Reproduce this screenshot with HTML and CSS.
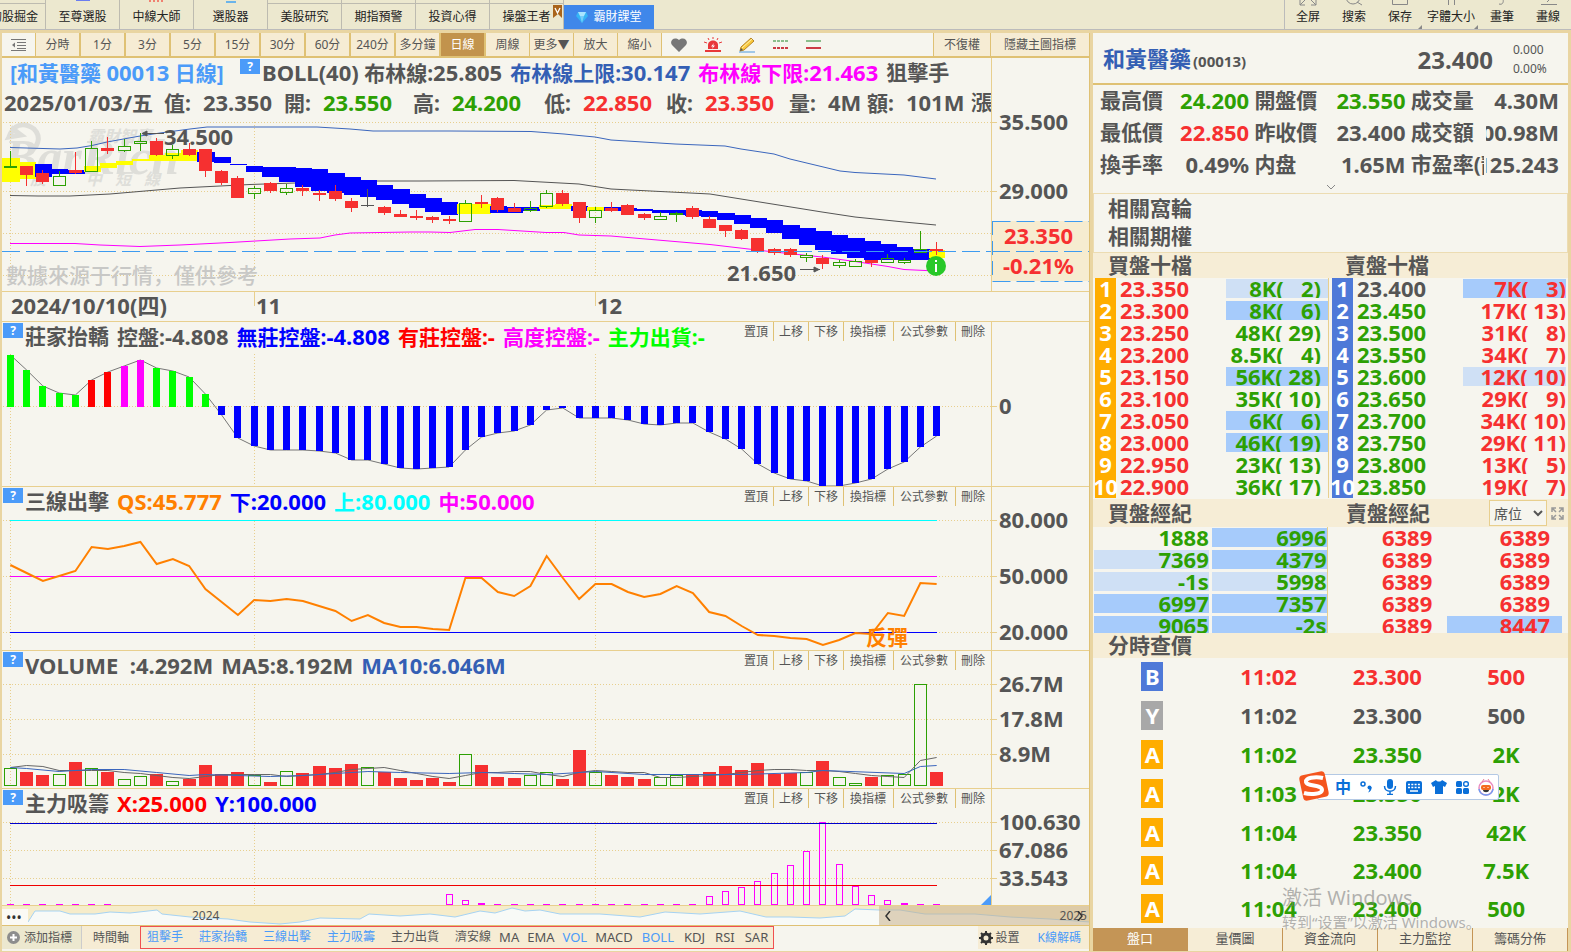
FILE: index.html
```html
<!DOCTYPE html>
<html lang="zh-CN">
<head>
<meta charset="utf-8">
<title>和黃醫藥 00013 日線</title>
<link rel="stylesheet" href="styles.css">
</head>
<body>
<div class="app">
  <header class="topbar">
    <nav class="tabs">
      <button class="tab tab-first capped">的股掘金</button>
      <button class="tab"><svg class="frag" width="16" height="2"><rect x="1" width="14" height="1" fill="#6b7df0"/></svg>至尊選股</button>
      <button class="tab"><svg class="frag" width="16" height="2"><path d="M1 0v2M5 0v2M9 0v2M13 0v2" stroke="#f08070" stroke-width="2"/></svg>中線大師</button>
      <button class="tab"><svg class="frag" width="16" height="3"><rect x="3" y="1" width="10" height="2" fill="#6bb4ea"/></svg>選股器</button>
      <button class="tab capped">美股研究</button>
      <button class="tab capped">期指預警</button>
      <button class="tab capped">投資心得</button>
      <button class="tab capped">操盤王者<svg class="vip" width="9" height="13"><path d="M0 0h9v13l-4-4-5 4z" fill="#a9641b"/><path d="M2 3l2.500 5L7 3" stroke="#fff" fill="none" stroke-width="1.300"/></svg></button>
      <button class="tab tab-course"><svg width="12" height="11" viewBox="0 0 12 11"><path d="M2 0h8l2 4-6 7-6-7z" fill="#35b4f5"/><path d="M2 0h8L8 4H4z" fill="#a8e4ff"/><path d="M4 4h4l-2 7z" fill="#74cdfb"/></svg>霸財課堂</button>
    </nav>
    <div class="tools">
      <button class="tool"><svg width="18" height="16"><path d="M1 10v5h5M1 15l6-6M17 10v5h-5M17 15l-6-6" fill="none" stroke="#888"/></svg>全屏</button>
      <button class="tool"><svg width="20" height="16"><circle cx="9" cy="7" r="7" fill="none" stroke="#888"/><path d="M13 12l5 3" stroke="#888"/></svg>搜索</button>
      <button class="tool more"><svg width="18" height="16"><path d="M1.500 1h15v13.500h-15z" fill="none" stroke="#888"/></svg>保存</button>
      <button class="tool more"><svg width="18" height="16"><path d="M6.500 0v15M12.500 0v15" stroke="#888"/></svg>字體大小</button>
      <button class="tool"><svg width="18" height="16"><path d="M6 14c3 1 5-1 4-5" fill="none" stroke="#888"/></svg>畫筆</button>
      <button class="tool"><svg width="18" height="16"><path d="M2 14.500h16M8 12l8-8" stroke="#888"/></svg>畫線</button>
    </div>
  </header>

  <main class="main">
    <section class="left">
      <div class="toolbar">
        <button class="tb-menu" aria-label="選單"><svg width="15" height="12"><path d="M0 .5h15M6 3.500h9M6 6.500h9M6 9.500h9M0 11.500h15" stroke="#777"/><path d="M4 3.500v5L1 6z" fill="#777"/></svg></button>
        <div class="periods">
          <button>分時</button><button>1分</button><button>3分</button><button>5分</button><button>15分</button><button>30分</button><button>60分</button><button>240分</button><button>多分鐘</button><button class="on">日線</button><button>周線</button><button>更多▼</button><button>放大</button><button>縮小</button>
        </div>
        <div class="marks">
          <svg width="16" height="14" viewBox="0 0 16 14"><path d="M8 14L1 7C-2 3 3-2 8 2c5-4 10 1 7 5z" fill="#777"/></svg>
          <svg width="18" height="16" viewBox="0 0 18 16"><path d="M4 12V8c0-6 10-6 10 0v4z" fill="#e8383a"/><path d="M1 13h16v2H1z" fill="#e8383a"/><path d="M9 0v2M4 1l1 2M14 1l-1 2M0 5l3 1M18 5l-3 1" stroke="#e8383a"/><path d="M10 6L7 9.500h2L8 12l3-3.500H9z" fill="#fff"/></svg>
          <svg width="17" height="16" viewBox="0 0 17 16"><path d="M0 15h16" stroke="#4c9ae0"/><path d="M1 14l1-4L12 1l3 3-10 9z" fill="#f9c93c" stroke="#b98524"/><path d="M3 11L13 2" stroke="#fff0b0"/><path d="M1 14l1-3 2 2z" fill="#555"/></svg>
          <svg width="16" height="12"><path d="M0 2h16" stroke="#8bbd8b" stroke-width="2" stroke-dasharray="3 1"/><path d="M0 9h16" stroke="#cc3b46" stroke-width="2" stroke-dasharray="3 1"/></svg>
          <svg width="15" height="12"><path d="M0 2h15" stroke="#8bbd8b" stroke-width="2"/><path d="M0 9h15" stroke="#cc3b46" stroke-width="2"/></svg>
        </div>
        <button class="tb-right">不復權</button>
        <button class="tb-axis">隱藏主圖指標</button>
      </div>

      <section class="panel">
        <div class="plot">
          <div class="boll">
            <span class="sky name">[和黃醫藥 <b>00013</b> 日線]</span>
            <button class="help">?</button>
            <span><b>BOLL(40)</b> 布林線:<b>25.805</b></span>
            <span class="navy">布林線上限:<b>30.147</b></span>
            <span class="mag">布林線下限:<b>21.463</b></span>
            <span>狙擊手</span>
          </div>
          <div class="ohlc">
            <span><b>2025/01/03/</b>五</span>
            <span>值:<b>23.350</b></span>
            <span>開:<b class="green">23.550</b></span>
            <span>高:<b class="green">24.200</b></span>
            <span>低:<b class="red">22.850</b></span>
            <span>收:<b class="red">23.350</b></span>
            <span>量:<b>4M</b></span>
            <span>額:<b>101M</b></span>
            <span>漲</span>
          </div>
          <svg id="kline" class="chart" height="173"></svg>
        </div>
        <svg id="kline-axis" class="axis"></svg>
      </section>
      <svg id="dates" class="dates" height="29"></svg>

      <section class="panel">
        <div class="plot">
          <div class="title">
            <button class="help">?</button>
            <span>莊家抬轎</span><span>控盤:<b>-4.808</b></span><span class="blue">無莊控盤:<b>-4.808</b></span><span class="pure">有莊控盤:<b>-</b></span><span class="mag">高度控盤:<b>-</b></span><span class="lime">主力出貨:<b>-</b></span>
            <span class="acts"><button>置頂</button><button>上移</button><button>下移</button><button>換指標</button><button>公式參數</button><button>刪除</button></span>
          </div>
          <svg id="control" class="chart" height="132"></svg>
        </div>
        <svg id="control-axis" class="axis"></svg>
      </section>

      <section class="panel">
        <div class="plot">
          <div class="title">
            <button class="help">?</button>
            <span>三線出擊</span><span class="orange"><b>QS:45.777</b></span><span class="blue">下<b>:20.000</b></span><span class="cyan">上<b>:80.000</b></span><span class="mag">中<b>:50.000</b></span>
            <span class="acts"><button>置頂</button><button>上移</button><button>下移</button><button>換指標</button><button>公式參數</button><button>刪除</button></span>
          </div>
          <svg id="three" class="chart" height="131"></svg>
        </div>
        <svg id="three-axis" class="axis"></svg>
      </section>

      <section class="panel">
        <div class="plot">
          <div class="title">
            <button class="help">?</button>
            <span><b>VOLUME &nbsp;:4.292M</b></span><span><b>MA5:8.192M</b></span><span class="navy"><b>MA10:6.046M</b></span>
            <span class="acts"><button>置頂</button><button>上移</button><button>下移</button><button>換指標</button><button>公式參數</button><button>刪除</button></span>
          </div>
          <svg id="volume" class="chart" height="105"></svg>
        </div>
        <svg id="volume-axis" class="axis"></svg>
      </section>

      <section class="panel">
        <div class="plot">
          <div class="title">
            <button class="help">?</button>
            <span>主力吸籌</span><span class="pure"><b>X:25.000</b></span><span class="blue"><b>Y:100.000</b></span>
            <span class="acts"><button>置頂</button><button>上移</button><button>下移</button><button>換指標</button><button>公式參數</button><button>刪除</button></span>
          </div>
          <svg id="absorb" class="chart" height="84"></svg>
          <i class="corner"></i>
        </div>
        <svg id="absorb-axis" class="axis"></svg>
      </section>

      <div class="strip">
        <svg id="history" width="100%" height="19"></svg>
        <span class="dots">•••</span>
        <span class="year">2024</span>
        <div class="thumb"><svg width="6" height="10"><path d="M5 0L1 5l4 5" fill="none" stroke="#333" stroke-width="1.500"/></svg><span>2025</span><svg width="6" height="10"><path d="M1 0l4 5-4 5" fill="none" stroke="#333" stroke-width="1.500"/></svg></div>
      </div>

      <footer class="bottombar">
        <button class="add"><svg width="13" height="13"><circle cx="6.500" cy="6.500" r="6.500" fill="#8d8d8d"/><path d="M6.500 3v7M3 6.500h7" stroke="#fff" stroke-width="2"/></svg>添加指標</button>
        <button class="timeaxis">時間軸</button>
        <div class="indicators">
          <button class="sky">狙擊手</button><button class="sky">莊家抬轎</button><button class="sky">三線出擊</button><button class="sky">主力吸籌</button><button>主力出貨</button><button class="last">濟安線</button><button class="lat">MA</button><button class="lat">EMA</button><button class="lat sky">VOL</button><button class="lat">MACD</button><button class="lat sky wide">BOLL</button><button class="lat wide">KDJ</button><button class="lat wide">RSI</button><button class="lat wide">SAR</button>
        </div>
        <div class="settings">
          <button><svg width="14" height="14" viewBox="-7 -7 14 14"><circle r="4" fill="none" stroke="#333" stroke-width="3"/><path d="M0-7V-4M0 7V4M-7 0h3M7 0H4M-5-5l2 2M5 5L3 3M-5 5l2-2M5-5L3-3" stroke="#333" stroke-width="2"/></svg>設置</button>
          <button class="sky">K線解碼</button>
        </div>
      </footer>
    </section>

    <aside class="right">
      <div class="quote">
        <h1>和黃醫藥<small>(00013)</small></h1>
        <strong>23.400</strong>
        <div class="chg"><span>0.000</span><span>0.00%</span></div>
      </div>
      <dl class="stats">
        <dt>最高價</dt><dd class="green">24.200</dd><dt>開盤價</dt><dd class="green">23.550</dd><dt>成交量</dt><dd>4.30M</dd>
        <dt>最低價</dt><dd class="red">22.850</dd><dt>昨收價</dt><dd>23.400</dd><dt>成交額</dt><dd>100.98M</dd>
        <dt>換手率</dt><dd>0.49%</dd><dt>内盘</dt><dd>1.65M</dd><dt>市盈率(静)</dt><dd>125.243</dd>
      </dl>
      <button class="expand" aria-label="展開"><svg width="10" height="6"><path d="M1 1l4 4 4-4" fill="none" stroke="#888"/></svg></button>
      <div class="related"><a href="#">相關窩輪</a><a href="#">相關期權</a></div>

      <div class="band"><h2>買盤十檔</h2><h2>賣盤十檔</h2></div>
      <div class="books">
        <table class="book buy"><tbody id="buy"></tbody></table>
        <table class="book sell"><tbody id="sell"></tbody></table>
      </div>

      <div class="band band-brokers"><h2>買盤經紀</h2><h2>賣盤經紀</h2>
        <select aria-label="經紀顯示"><option>席位</option></select>
        <button class="full" aria-label="放大"><svg width="13" height="13"><path d="M1 5V1h4M8 1h4v4M12 8v4H8M5 12H1V8M1 1l4 4M12 1L8 5M12 12L8 8M1 12l4-4" fill="none" stroke="#999" stroke-width="1.500"/></svg></button>
      </div>
      <div class="brokers">
        <table><tbody id="brokers"></tbody></table>
      </div>

      <div class="band"><h2>分時查價</h2></div>
      <table class="ticks"><tbody id="ticks"></tbody></table>

      <nav class="rtabs"><button class="on">盤口</button><button>量價圖</button><button>資金流向</button><button>主力監控</button><button>籌碼分佈</button></nav>

      <div class="activate"><p>激活 Windows</p><p>转到“设置”以激活 Windows。</p></div>
      <div class="ime">
        <svg class="ime-logo" width="32" height="32" viewBox="0 0 32 32"><rect x="3" y="3" width="26" height="26" rx="4" fill="#f4551e" transform="rotate(-12 16 16)"/><path d="M25 8C17 6 7 8 8 12c1 5 16 2 16 8 0 4-11 5-18 3" fill="none" stroke="#fff" stroke-width="4"/></svg>
        <span>中</span>
        <svg width="14" height="12"><circle cx="3" cy="3" r="2" fill="none" stroke="#0a6fd8" stroke-width="1.500"/><circle cx="9.500" cy="6.500" r="2" fill="#0a6fd8"/><path d="M11.500 6c.3 3-1 4.500-3.500 5.500 1.200-1.500 1.500-2.500 1.500-4z" fill="#0a6fd8"/></svg>
        <svg width="14" height="16"><rect x="4" y="0" width="6" height="10" rx="3" fill="#0a6fd8"/><path d="M1.500 7c0 7 11 7 11 0M7 12v4M4 15.500h6" fill="none" stroke="#0a6fd8" stroke-width="1.500"/></svg>
        <svg width="16" height="13"><rect width="16" height="13" rx="2" fill="#0a6fd8"/><path d="M2 3.500h12M2 6.500h12" stroke="#fff" stroke-width="1.500" stroke-dasharray="2 1.300"/><path d="M4 10h8" stroke="#fff" stroke-width="1.500"/></svg>
        <svg width="16" height="14"><path d="M5 0c1 2 5 2 6 0l5 3-2 4-2-1v8H4V6L2 7 0 3z" fill="#0a6fd8"/></svg>
        <svg width="13" height="13"><rect width="6" height="6" rx="1.500" fill="#0a6fd8"/><rect x="7.700" y=".7" width="4.600" height="4.600" rx="2" fill="none" stroke="#0a6fd8" stroke-width="1.400"/><rect y="7" width="6" height="6" rx="1.500" fill="#0a6fd8"/><rect x="7" y="7" width="6" height="6" rx="1.500" fill="#0a6fd8"/></svg>
        <svg width="16" height="17"><ellipse cx="8" cy="9" rx="7" ry="7" fill="#fff" stroke="#e98bc0" stroke-width="1.500"/><path d="M1 10c1 8 13 8 14 0" fill="none" stroke="#6f9df3" stroke-width="1.500"/><rect x="3" y="6" width="10" height="5" rx="2" fill="#f46a1f"/><path d="M6 8v1M10 8v1" stroke="#fff"/><path d="M5 11h6c0 3-6 3-6 0z" fill="#333"/><path d="M4 3l2-3M12 3l-2-3" stroke="#ea7f97"/></svg>
      </div>
    </aside>
  </main>
</div>
<script src="charts.js"></script>
</body>
</html>
```
FILE: styles.css
```css
* { box-sizing: border-box; }
html, body { margin: 0; }
body {
  background: #e9d5a2;
  color: #555;
  font: 12px/16px "Noto Sans", "Noto Sans CJK SC", sans-serif;
}
button { background: none; border: 0; border-radius: 0; margin: 0; padding: 0; color: inherit; font: inherit; white-space: nowrap; }
svg { display: block; flex: none; }
a { color: inherit; text-decoration: none; }
b { font-weight: 700; }

.app { min-height: 100vh; display: flex; flex-direction: column; overflow: hidden; }

/* colours */
.green { color: #2da003; }
.red { color: #f63030; }
.pure { color: #f00; }
.sky { color: #4b9bf9; }
.navy { color: #345fb4; }
.blue { color: #00f; }
.mag { color: #f0f; }
.lime { color: #0f0; }
.cyan { color: #0ff; }
.orange { color: #ff8000; }

/* top bar */
.topbar {
  display: flex;
  justify-content: space-between;
  height: 30px;
  background: #ece8cf;
  border-bottom: 1px solid #bbb;
  color: #222;
  overflow: hidden;
}
.tabs { display: flex; }
.tab {
  position: relative;
  width: 74px;
  height: 29px;
  padding-top: 4px;
  border-right: 1px solid #bdbbb0;
}
.tab-first { margin-left: -28px; padding-left: 11px; }
.capped::before { content: ""; position: absolute; left: 0; right: 0; top: 3px; height: 1px; background: #bdbbb0; }
.frag { position: absolute; left: 29px; top: 0; }
.vip { position: absolute; right: 1px; top: 5px; }
.tab-course {
  display: flex;
  align-items: center;
  justify-content: center;
  gap: 5px;
  width: 90px;
  height: 24px;
  margin-top: 5px;
  padding: 0;
  border: 0;
  background: #3f87ea;
  color: #fff;
}
.tools { display: flex; border-left: 1px solid #bbb; }
.tool {
  position: relative;
  display: flex;
  flex-direction: column;
  align-items: center;
  justify-content: flex-end;
  gap: 3px;
  height: 29px;
  padding: 0 0 4px;
  width: 46px;
}
.tool:nth-child(4) { width: 56px; }
.tool.more::after {
  content: "";
  position: absolute;
  right: 1px;
  bottom: 0;
  border: 2px solid;
  border-color: transparent #888 #888 transparent;
}

/* frame */
.main {
  flex: 1;
  display: grid;
  grid-template-columns: minmax(0, 1fr) 475px;
  gap: 3px;
  padding: 3px 3px 3px 2px;
}
.left, .right { background: #f6f5ee; min-width: 0; display: flex; flex-direction: column; }
.left { border-right: 1px solid #dfc174; }
.right { position: relative; }

/* period toolbar */
.toolbar { display: flex; height: 25px; border-bottom: 2px solid #dfc174; }
.tb-menu { width: 34px; display: flex; align-items: center; justify-content: center; border-right: 1px solid #dfc174; }
.periods { display: flex; }
.periods button, .tb-right, .tb-axis { width: 45px; background: #f6ecd4; border-right: 2px solid #dfc174; }
.periods button:nth-child(n+11) { width: 44px; border-right-width: 1px; }
.periods .on { background: #c2934c; color: #fff; }
.marks { flex: 1; display: flex; align-items: center; gap: 17px; padding-left: 9px; }
.tb-right { width: 58px; border-left: 1px solid #dfc174; border-right: 1px solid #dfc174; }
.tb-axis { width: 98px; border-right: 0; }

/* chart panels */
.panel { display: grid; grid-template-columns: minmax(0, 1fr) 97px; border-bottom: 1px solid #e8cf8e; }
.plot { position: relative; min-width: 0; overflow: hidden; border-right: 1px solid #e8cf8e; }
.chart { width: 100%; }
.axis { width: 97px; height: 0; min-height: 100%; }
.dates { width: 100%; height: 30px; border-bottom: 1px solid #e8cf8e; }
.boll, .ohlc, .title { font-size: 21px; font-weight: 700; white-space: nowrap; }
.boll b, .ohlc b, .title b { font-size: 22px; }
.boll { display: flex; gap: 8px; height: 30px; line-height: 28px; padding-left: 8px; }
.boll .name { width: 222px; }
.boll .help { margin: 1px -6px 0 0; }
.ohlc {
  display: grid;
  grid-template-columns: 160px 120px 129px 131px 122px 123px 78px 104px 40px;
  height: 30px;
  line-height: 29px;
  padding-left: 2px;
}
.ohlc span + span b { margin-left: 12px; }
.title { display: flex; gap: 8px; height: 32px; line-height: 28px; padding-left: 1px; }
.title .help { margin: 1px -6px 0 0; }
.help { width: 20px; height: 15px; background: #4b9bf9; color: #fff; font-size: 12px; line-height: 15px; flex: none; }
.acts { margin: 0 1px 0 auto; display: flex; height: 19px; font-size: 12px; font-weight: 400; line-height: 16px; }
.acts button { padding: 0 5px; border-right: 1px solid #dfc174; }
.acts button:nth-child(4), .acts button:nth-child(5) { padding: 0 7px 0 6px; }
.acts button:last-child { border: 0; }
.corner { position: absolute; right: 0; bottom: 0; border: 5px solid; border-color: transparent #4b9bf9 #4b9bf9 transparent; }
svg text { font: 700 22px "Noto Sans", "Noto Sans CJK SC", sans-serif; fill: #555; }
svg text.logo { font: italic 700 50px "Liberation Serif", serif; fill: #deded9; }
svg text.logo-cjk { font-size: 16px; font-style: italic; fill: #deded9; }
svg text.note { font-size: 21px; font-weight: 500; fill: #c8c8c6; }
svg text.hit { font-size: 21px; fill: #ff8000; }
svg text.price { fill: #f63030; }

/* history strip */
.strip { position: relative; height: 20px; background: #f6ecca; border-bottom: 1px solid #dfc174; }
.dots { position: absolute; left: 0; top: 3px; width: 26px; height: 16px; padding-left: 4px; background: #fbfaf5; color: #333; font-size: 14px; line-height: 18px; }
.year { position: absolute; left: 190px; top: 2px; }
.thumb {
  position: absolute;
  right: 0;
  top: 0;
  width: 210px;
  height: 19px;
  display: flex;
  align-items: center;
  padding: 0 6px 0 6px;
  background: rgba(200, 176, 140, .55);
}
.thumb span { margin: 0 -10px 0 auto; }

/* bottom bar */
.bottombar { display: flex; height: 23px; }
.bottombar button { height: 23px; }
.add { display: flex; align-items: center; gap: 4px; width: 80px; padding-left: 5px; background: #ece8cf; border-right: 1px solid #ccc; }
.add, .timeaxis, .settings { line-height: 20px; }
.timeaxis { width: 58px; background: #f6ecd4; }
.indicators { display: flex; background: #f6ecd4; border: 1px solid #f05050; height: 23px; }
.indicators button { padding: 0 8px; height: 20px; }
.indicators button:first-child { padding-left: 6px; }
.indicators .last { padding-right: 4px; }
.indicators .lat { padding: 0 4px; font-size: 13px; }
.indicators .wide { padding: 0 5px; }
.settings { display: flex; gap: 18px; margin-left: auto; padding: 0 8px 0 1px; background: #f6ecd4; }
.settings button { display: flex; align-items: center; gap: 3px; }

/* quote */
.quote { display: flex; align-items: center; height: 52px; padding: 3px 18px 0 10px; border-bottom: 2px solid #dfc174; }
.quote h1 { margin: 0; font-size: 22px; line-height: 30px; color: #345fb4; }
.quote small { color: #555; font-size: 15px; padding-left: 2px; }
.quote strong { margin-left: auto; font-size: 24px; }
.chg { display: grid; gap: 3px; margin-left: 20px; width: 37px; }
.stats {
  display: grid;
  grid-template-columns: 64px 84px 71px 80px 76px 73px;
  grid-auto-rows: 32px;
  justify-content: space-between;
  margin: 0;
  padding: 0 9px 0 7px;
  font-weight: 700;
  line-height: 31px;
  white-space: nowrap;
}
.stats dt { font-size: 21px; overflow: hidden; }
.stats dd { margin: 0; font-size: 22px; display: flex; justify-content: flex-end; overflow: hidden; }
.stats dt:nth-of-type(3n+2) { padding-left: 2px; }
.stats dt:nth-of-type(3n) { padding-left: 3px; }
.stats dd:nth-of-type(3n+1) { padding-right: 1px; }
.expand { height: 12px; align-self: center; }
.related { display: grid; height: 60px; padding: 0 0 2px 14px; border: 1px solid #ecdcb2; font-size: 21px; font-weight: 700; line-height: 28px; }

/* bands */
.band { display: grid; grid-template-columns: 237px 1fr; height: 25px; padding-left: 15px; background: #f6edd6; align-items: center; }
.band h2 { margin: 0; font-size: 21px; line-height: 25px; }
.band-brokers { height: 28px; grid-template-columns: 237px 1fr 58px 18px; gap: 0 1px; padding-right: 2px; }
.band-brokers select { width: 58px; height: 26px; border: 1px solid #e8cf8e; background: #f6f5ee; color: #555; font: 14px "Noto Sans", "Noto Sans CJK SC", sans-serif; padding: 0; }
.full { display: flex; justify-content: center; }

/* order book */
table { border-collapse: collapse; table-layout: fixed; width: 100%; font-size: 22px; font-weight: 700; line-height: 20px; }
td { padding: 0; white-space: pre; vertical-align: top; }
.books { display: grid; grid-template-columns: 1fr 1fr; gap: 3px; padding: 0 2px; height: 221px; }
.book tr { height: 22px; }
.book .no { width: 21px; background: #ffad00; color: #fff; text-align: center; }
.book .no div { margin: 0 -4px; }
.book .qty { width: 103px; }
.book .px { padding-left: 4px; }
.buy { border-right: 1px solid #e8cf8e; height: 220px; }
.sell { width: 100%; height: 220px; }
.sell .no { background: #4e79d8; }
.cell { height: 19px; margin-top: 1px; line-height: 18px; overflow: hidden; text-align: right; }
.buy .cell { padding-right: 7px; }
.hot { background: #a6cbfb; }
.warm { background: #cfe0f5; }

.brokers { height: 106px; overflow: hidden; padding: 0 3px 0 1px; background: linear-gradient(#e8cf8e, #e8cf8e) 234px 0 / 1px 100% no-repeat; }
.brokers tr { height: 22px; }
.brokers td { padding-right: 3px; }
.brokers td:nth-child(n+3) .cell { padding-right: 12px; }

.ticks { text-align: center; }
.ticks tr { height: 39px; }
.ticks tr:nth-child(n+5) { height: 38px; }
.ticks td { width: 25%; line-height: 36px; }
.ticks td:nth-child(n+2) { padding-right: 5px; }
.tag { width: 22px; height: 29px; margin: 4px auto; line-height: 28px; color: #fff; background: #ffad00; }
.tag.B { background: #4e79d8; }
.tag.Y { background: #a8a8a8; }

.rtabs { display: grid; grid-template-columns: repeat(5, 1fr); height: 23px; margin-top: auto; background: #f6edd6; font-size: 13px; }
.rtabs button { border-right: 1px solid #c49556; padding-bottom: 3px; }
.rtabs .on { background: #c49556; color: #fff; }

/* floating overlays */
.activate { position: absolute; left: 189px; bottom: 18px; color: rgba(130, 130, 130, .6); white-space: nowrap; pointer-events: none; }
.activate p { margin: 0; font-size: 20px; line-height: 26px; }
.activate p + p { font-size: 15px; line-height: 22px; }
.ime {
  position: absolute;
  left: 224px;
  top: 741px;
  display: flex;
  align-items: center;
  gap: 9px;
  height: 26px;
  padding: 0 4px 0 17px;
  background: #fff;
  border: 1px solid #b4c9e4;
  border-radius: 2px;
}
.ime-logo { position: absolute; left: -20px; top: -5px; }
.ime span { color: #0a6fd8; font-size: 16px; font-weight: 700; }
```
FILE: charts.js
```js
const NS = 'http://www.w3.org/2000/svg';
const GOLD = '#e8cf8e', RED = '#f63030', GREEN = '#2da003', GRAY = '#555';
const LEFT = 2, STEP = 16.25;
const cx = i => 10.4 + STEP * i;

function layer(id, top) {
  const g = document.createElementNS(NS, 'g');
  g.setAttribute('transform', `translate(${-(id.endsWith('axis') ? 992 : LEFT)} ${-top})`);
  document.getElementById(id).append(g);
  return (tag, attrs, text) => {
    const el = document.createElementNS(NS, tag);
    for (const k in attrs) el.setAttribute(k, attrs[k]);
    if (text) el.textContent = text;
    g.append(el);
  };
}
const hline = (d, y, stroke, x1, x2, extra) => d('line', { x1, x2, y1: y, y2: y, stroke, ...extra });
const bar = (d, x, y, w, h, fill) => d('rect', { x: Math.round(x - w / 2), y, width: w, height: h, fill, 'shape-rendering': 'crispEdges' });
const frame = (d, x, y, w, h, stroke) => d('rect', { x: Math.round(x - w / 2) + .5, y: y + .5, width: w - 1, height: h - 1, fill: 'none', stroke });
const path = (d, pts, stroke, w = 1) => d('polyline', { points: pts.map(p => p.join()).join(' '), fill: 'none', stroke, 'stroke-width': w });
const dots = { 'stroke-dasharray': '1 2' };
function grid(d, ys, top, bottom) {
  ys.forEach(y => hline(d, y, GOLD, 3, 3000, dots));
  [0, 15, 36].forEach(i => { const x = Math.floor(cx(i)) + .5; d('line', { x1: x, x2: x, y1: top, y2: bottom, stroke: GOLD, ...dots }); });
}
function axis(id, top, labels) {
  const d = layer(id, top);
  labels.forEach(([y, t]) => { hline(d, y, GOLD, 992, 997); d('text', { x: 999, y: Math.floor(y) + 8 }, t); });
  return d;
}

/* candles: colour, body top, body bottom, high, low */
const candles = `g166,168,151,168 r166,175,166,186 r173,182,170,184 g176,186,171,186 r170,173,152,174 g148,172,141,172
r148,151,137,154 g146,151,139,152 g141,144,133,151 r141,155,138,156 g149,156,145,159 r149,155,143,156 r149,171,149,177
r171,183,170,185 r178,198,176,198 g188,194,186,199 r183,191,182,193 g188,193,184,195 r188,191,185,196 r193,195,190,201
r191,199,185,201 r201,208,198,212 k205,206,189,207 r207,213,206,215 r214,217,210,217 r216,218,210,220 r217,220,216,223
r219,221,216,224 g203,222,200,222 r202,204,195,208 r198,210,197,212 r208,212,203,212 g208,211,201,212 g193,207,190,208
r193,204,190,206 r202,218,202,223 g210,218,207,223 r208,211,202,212 r205,215,204,215 r214,218,213,220 g216,220,212,220
g213,215,212,222 r208,217,206,219 r219,228,216,228 r225,231,225,237 r230,239,229,240 r238,251,238,253 r249,253,248,255
r249,255,248,257 g255,258,253,262 r258,264,255,269 g262,266,260,268 g261,267,259,267 r260,263,260,267 g258,263,254,263
g260,263,258,264 g249,253,231,253 r249,251,242,255`.split(/\s+/);
const bands = `y158,182 y162,179 b164,177 b169,174 b170,174 y166,172 y163,168 y161,165 y159,161 y155,161 y153,161 y150,161
b152,162 b157,163 b164,165 b166,172 b167,177 b167,182 b168,187 b169,191 b173,193 b177,195 b180,197 b185,200 b189,204
b194,208 b198,212 b202,215 y204,214 y204,214 b206,213 b207,213 b207,211 y205,209 y204,209 b206,211 y207,211 b207,211
b208,211 b209,211 b210,213 b210,215 b210,216 b211,217 b213,220 b215,224 b218,228 b220,233 b225,239 b228,245 b231,250
b235,254 b238,258 b241,260 b244,260 b247,260 b249,260 y250,258`.split(/\s+/);

let d = layer('kline', 118);
d('path', { d: 'M9 137c4-12 14-16 25-8 8 8 4 20-6 22M9 137l4-8 8 6z', fill: 'none', stroke: '#deded9', 'stroke-width': 5 });
d('text', { x: 4, y: 174, class: 'logo' }, 'BarRich');
d('text', { x: 88, y: 142, class: 'logo-cjk' }, '霸財智贏');
[['股', 30], ['中', 86], ['短', 115], ['線', 144]].forEach(([t, x]) => d('text', { x, y: 185, class: 'logo-cjk' }, t));
grid(d, [122.5, 191.5, 233.5, 275.5], 122, 276);
path(d, [[10, 195.5], [38, 196], [70, 196], [110, 194], [180, 188], [250, 184.5], [295, 183], [377, 181], [420, 181], [514, 180.5], [579, 184], [611, 189], [710, 194], [741, 199], [822, 212], [855, 217], [904, 222], [936, 225]], GRAY);
bands.forEach((s, i) => {
  const [a, b] = s.slice(1).split(',').map(Number);
  const x = Math.round(cx(i) - 8.1), x2 = Math.round(cx(i + 1) - 8.1);
  d('rect', { x, y: a, width: x2 - x + (i < 57 ? 1 : 0), height: b - a, fill: s[0] === 'y' ? '#ff0' : '#00f', 'shape-rendering': 'crispEdges' });
});
path(d, [[10, 147.5], [43, 148.5], [60, 149], [77, 148], [92, 145.5], [107, 142], [140, 136], [160, 133], [190, 129], [207, 127], [317, 127], [350, 129], [373, 131], [450, 131], [531, 131.5], [564, 134], [579, 135.5], [595, 137], [611, 140], [675, 144], [725, 146], [741, 149], [774, 154], [790, 159], [840, 171], [855, 172.5], [904, 175], [936, 179]], '#3b66bd');
path(d, [[10, 243.5], [75, 243.5], [100, 245], [140, 246.5], [180, 245], [230, 242.5], [290, 239], [320, 238], [335, 235], [350, 233], [410, 232], [430, 232], [450, 232.5], [475, 229.5], [498, 229.5], [546, 232.5], [564, 232.5], [579, 235], [611, 236], [628, 237.5], [710, 244.5], [774, 252], [822, 257], [855, 261.5], [888, 266.5], [904, 269.5], [936, 271]], '#f0f');
candles.forEach((s, i) => {
  const [t, b, hi, lo] = s.slice(1).split(',').map(Number);
  const c = { g: GREEN, r: RED, k: GRAY }[s[0]];
  if (s[0] === 'g' && b - t > 2) {
    bar(d, cx(i), hi, 1, t - hi, c);
    bar(d, cx(i), b, 1, lo - b, c);
    frame(d, cx(i), t, 13, b - t, c);
  } else {
    bar(d, cx(i), hi, 1, lo - hi, c);
    bar(d, cx(i), t, 13, b - t, c);
  }
});
hline(d, 251.5, '#3d9bf0', 2, 3000, { 'stroke-dasharray': '18 6' });
d('path', { d: 'M142 133.500h22M147 131l-5 2.500 5 2.500zM800 269.500h20M814 267l5 2.500-5 2.500z', stroke: GRAY, fill: GRAY });
d('text', { x: 164, y: 145 }, '34.500');
d('text', { x: 727, y: 281 }, '21.650');
d('text', { x: 6, y: 283, class: 'note' }, '數據來源于行情，僅供參考');
d('circle', { cx: 936, cy: 266, r: 10, fill: '#28c828' });
d('path', { d: 'M936 264v8M936 260v2', stroke: '#fff', 'stroke-width': 2 });

d = axis('kline-axis', 58, [[122.5, '35.500'], [191.5, '29.000']]);
d('rect', { x: 992, y: 221, width: 98, height: 60, fill: '#f6ecd0' });
d('path', { d: 'M992.500 221.500h97M992.500 281.500h97', stroke: '#3d9bf0', 'stroke-dasharray': '18 6' });
d('path', { d: 'M992.500 221v60', stroke: '#3d9bf0', 'stroke-dasharray': '14 6' });
hline(d, 251.5, '#3d9bf0', 992, 1090, { 'stroke-dasharray': '18 6' });
d('text', { x: 1004, y: 244, class: 'price' }, '23.350');
d('text', { x: 1003, y: 274, class: 'price' }, '-0.21%');

d = layer('dates', 292);
d('text', { x: 11, y: 314 }, '2024/10/10(四)');
d('text', { x: 256, y: 314 }, '11');
d('text', { x: 597, y: 314 }, '12');
[254.5, 595.5].forEach(x => d('line', { x1: x, x2: x, y1: 292, y2: 306, stroke: GOLD }));

/* control indicator */
const ctl = [355, 370, 386, 393, 395, 380, 372, 366, 360, 368, 371, 377, 394, 415, 438, 446, 450, 450, 450, 451, 453, 460, 460, 464, 468, 469, 468, 467, 450, 437, 433, 431, 425, 410, 408, 418, 418, 418, 420, 424, 425, 423, 423, 432, 439, 449, 464, 473, 479, 481, 486, 486, 483, 479, 469, 462, 447, 436];
d = layer('control', 354);
grid(d, [406.5], 354, 486);
path(d, ctl.map((y, i) => [cx(i), y]), '#777');
ctl.forEach((y, i) => {
  if (y < 406) bar(d, cx(i), y, 7, 407 - y, i === 5 || i === 6 ? '#f00' : i === 7 || i === 8 ? '#f0f' : '#0f0');
  else bar(d, cx(i), 406, 7, y - 406, '#00f');
});
axis('control-axis', 322, [[406.5, '0']]);

/* three lines */
const qs = [565, 573, 581, 576, 571, 547, 549, 546, 542, 564, 559, 566, 589, 602, 615, 600, 601, 599, 601, 606, 611, 621, 615, 623, 627, 627, 629, 630, 578, 578, 592, 596, 586, 556, 578, 599, 584, 584, 592, 597, 594, 586, 593, 612, 616, 626, 635, 636, 638, 639, 645, 640, 633, 634, 613, 616, 583, 584];
d = layer('three', 519);
grid(d, [520.5, 576.5, 632.5], 521, 650);
hline(d, 520.5, '#0ff', 10, 937);
hline(d, 576.5, '#f0f', 10, 937);
hline(d, 632.5, '#00f', 10, 937);
path(d, qs.map((y, i) => [cx(i), y]), '#ff8000', 2);
d('text', { x: 866, y: 645, class: 'hit' }, '反彈');
axis('three-axis', 487, [[520.5, '80.000'], [576.5, '50.000'], [632.5, '20.000']]);

/* volume */
const vol = 'g768 r772 r775 g774 r762 g768 r772 g779 g776 r774 g781 r779 r765 r774 r772 g775 r782 g771 r773 r766 r768 r764 g767 r772 r778 r780 r778 r782 g754 r765 r777 r778 g775 g772 r779 r750 g772 r775 r777 r779 g777 g775 r774 r772 r766 r770 r763 r774 r773 g772 r761 g777 g783 r777 g775 g774 g684 r772'.split(' ');
const ma5 = [767, 765, 766, 770, 770, 770, 770, 772, 773, 775, 777, 778, 776, 774, 774, 774, 774, 776, 775, 774, 772, 769, 768, 767, 770, 773, 776, 778, 775, 772, 772, 771, 771, 774, 776, 772, 770, 771, 772, 772, 777, 777, 776, 775, 774, 772, 770, 769, 769, 770, 770, 771, 773, 775, 776, 777, 760, 757];
const ma10 = [[0, 767], [1, 768], [3, 771], [5, 769], [7, 769], [9, 772], [11, 775], [12, 774], [14, 775], [16, 776], [18, 775], [20, 773], [22, 771], [24, 772], [27, 773], [29, 772], [31, 773], [33, 774], [36, 771], [39, 774], [44, 774], [45, 774], [49, 772], [50, 770], [55, 773], [56, 766], [57, 765]];
d = layer('volume', 683);
grid(d, [684.5, 719.5, 754.5], 684, 786);
vol.forEach((s, i) => {
  const y = +s.slice(1);
  s[0] === 'g' ? frame(d, cx(i), y, 13, 786 - y, GREEN) : bar(d, cx(i), y, 13, 786 - y, RED);
});
path(d, ma5.map((y, i) => [cx(i), y + .5]), '#666');
path(d, ma10.map(([i, y]) => [cx(i), y + .5]), '#3b66bd');
axis('volume-axis', 651, [[684.5, '26.7M'], [719.5, '17.8M'], [754.5, '8.9M']]);

/* absorption */
const ab = { 27: 894, 28: 900, 29: 903, 43: 896, 44: 891, 45: 887, 46: 881, 47: 873, 48: 865, 49: 851, 50: 822, 51: 864, 52: 886, 53: 895, 54: 900, 55: 903 };
d = layer('absorb', 821);
grid(d, [822.5, 850.5, 878.5], 822, 905);
for (let i = 0; i < 58; i++) {
  if (ab[i]) frame(d, cx(i), ab[i], 7, 905 - ab[i], '#f0f');
  else if (i < 7 || i > 29) bar(d, cx(i), 904, 7, 1, '#f0f');
}
hline(d, 823.5, '#00c', 10, 937);
hline(d, 885.5, '#f00000', 10, 937);
axis('absorb-axis', 789, [[822.5, '100.630'], [850.5, '67.086'], [878.5, '33.543']]);

/* history strip */
const hist = [[28, 922], [35, 911], [40, 911], [60, 911], [70, 914], [95, 914], [110, 912], [130, 913], [157, 910], [162, 914], [190, 917], [228, 919], [250, 922], [280, 924], [300, 922], [320, 918], [360, 919], [369, 914], [400, 916], [430, 914], [455, 917], [480, 911], [495, 913], [512, 908], [525, 911], [540, 910], [560, 914], [600, 914], [640, 917], [665, 912], [700, 914], [740, 911], [766, 917], [790, 917], [820, 918], [845, 916], [855, 909], [880, 910], [900, 910], [925, 914], [975, 914], [1010, 917], [1050, 919], [1090, 922]];
d = layer('history', 906);
d('polygon', { points: '28,925 ' + hist.map(p => p.join()).join(' ') + ' 1090,925', fill: '#f8faf7' });
path(d, hist, '#a6d3f3');

/* order book, brokers, ticks */
const qty = (q, n) => `${q}(${String(n).length < 2 ? '   ' : ' '}${n})`;
const row = (i, px, c, q, n, qc, mark) => `<tr><td class="no"><div>${i + 1}</div></td><td class="px ${c}">${px}</td><td class="qty"><div class="cell ${qc} ${mark || ''}">${qty(q, n)}</div></td></tr>`;
document.getElementById('buy').innerHTML = [['8K', 2, 'warm'], ['8K', 6, 'hot'], ['48K', 29], ['8.5K', 4], ['56K', 28, 'hot'], ['35K', 10], ['6K', 6, 'hot'], ['46K', 19, 'hot'], ['23K', 13], ['36K', 17]]
  .map(([q, n, m], i) => row(i, (23.35 - i * .05).toFixed(3), 'red', q, n, 'green', m)).join('');
document.getElementById('sell').innerHTML = [['7K', 3, 'hot'], ['17K', 13], ['31K', 8], ['34K', 7], ['12K', 10, 'warm'], ['29K', 9], ['34K', 10], ['29K', 11], ['13K', 5], ['19K', 7]]
  .map(([q, n, m], i) => row(i, (23.4 + i * .05).toFixed(3), i ? 'green' : '', q, n, 'red', m)).join('');
document.getElementById('brokers').innerHTML = [['1888', '', '6996', 'hot'], ['7369', 'warm', '4379', 'hot'], ['-1s', 'warm', '5998', 'warm'], ['6997', 'hot', '7357', 'hot'], ['9065', 'hot', '-2s', 'hot']]
  .map(([a, ac, b, bc], i) => `<tr><td><div class="cell green ${ac}">${a}</div></td><td><div class="cell green ${bc}">${b}</div></td><td><div class="cell red">6389</div></td><td><div class="cell red ${i > 3 ? 'hot' : ''}">${i > 3 ? '8447' : '6389'}</div></td></tr>`).join('');
document.getElementById('ticks').innerHTML = [['B', '11:02', '23.300', '500', 'red'], ['Y', '11:02', '23.300', '500', ''], ['A', '11:02', '23.350', '2K', 'green'], ['A', '11:03', '23.350', '2K', 'green'], ['A', '11:04', '23.350', '42K', 'green'], ['A', '11:04', '23.400', '7.5K', 'green'], ['A', '11:04', '23.400', '500', 'green']]
  .map(([t, h, p, q, c]) => `<tr class="${c}"><td><div class="tag ${t}">${t}</div></td><td>${h}</td><td>${p}</td><td>${q}</td></tr>`).join('');
```
